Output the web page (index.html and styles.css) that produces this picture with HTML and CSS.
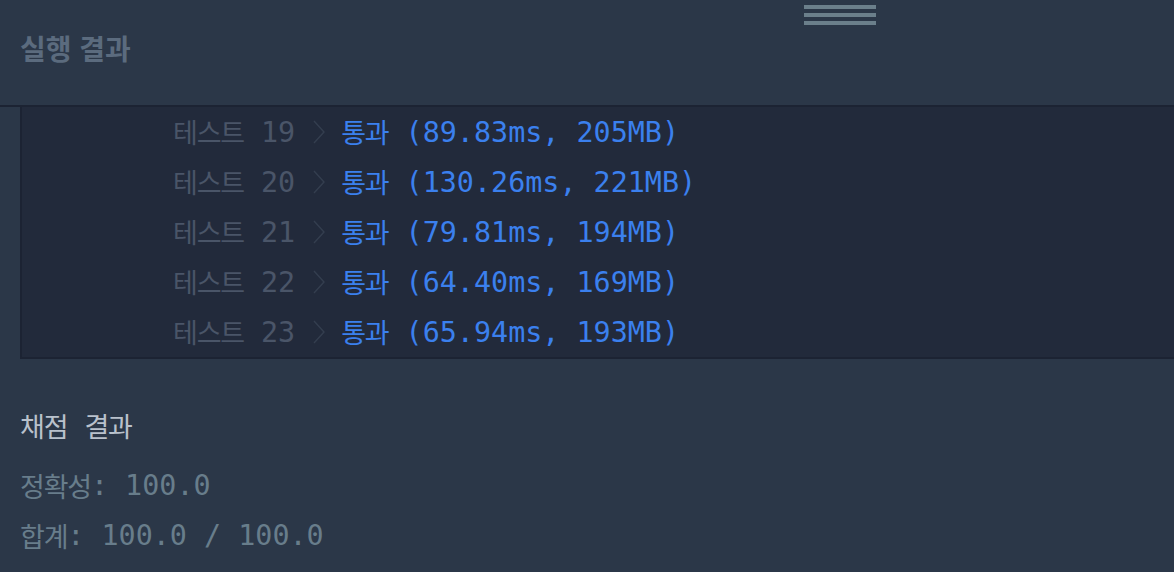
FILE: index.html
```html
<!DOCTYPE html>
<html lang="ko">
<head>
<meta charset="utf-8">
<link rel="stylesheet" href="styles.css">
</head>
<body>
<div class="page">
  <header class="head">
    <div class="grip"><span></span><span></span><span></span></div>
    <h2 class="title">실행 결과</h2>
  </header>
  <div class="console">
    <div class="row"><span class="ko gray">테스트</span><span class="gray"> 19</span><svg class="chev" viewBox="0 0 12 24"><path d="M1 1 L11 12 L1 23" /></svg><span class="ko pass">통과</span><span class="pass"> (89.83ms, 205MB)</span></div>
    <div class="row"><span class="ko gray">테스트</span><span class="gray"> 20</span><svg class="chev" viewBox="0 0 12 24"><path d="M1 1 L11 12 L1 23" /></svg><span class="ko pass">통과</span><span class="pass"> (130.26ms, 221MB)</span></div>
    <div class="row"><span class="ko gray">테스트</span><span class="gray"> 21</span><svg class="chev" viewBox="0 0 12 24"><path d="M1 1 L11 12 L1 23" /></svg><span class="ko pass">통과</span><span class="pass"> (79.81ms, 194MB)</span></div>
    <div class="row"><span class="ko gray">테스트</span><span class="gray"> 22</span><svg class="chev" viewBox="0 0 12 24"><path d="M1 1 L11 12 L1 23" /></svg><span class="ko pass">통과</span><span class="pass"> (64.40ms, 169MB)</span></div>
    <div class="row"><span class="ko gray">테스트</span><span class="gray"> 23</span><svg class="chev" viewBox="0 0 12 24"><path d="M1 1 L11 12 L1 23" /></svg><span class="ko pass">통과</span><span class="pass"> (65.94ms, 193MB)</span></div>
  </div>
  <section class="score">
    <div class="score-title"><span class="ko">채점</span><span> </span><span class="ko">결과</span></div>
    <div class="score-line"><span class="ko">정확성</span><span>: 100.0</span></div>
    <div class="score-line"><span class="ko">합계</span><span>: 100.0 / 100.0</span></div>
  </section>
</div>
</body>
</html>
```

FILE: styles.css
```css
html, body {
  margin: 0;
  padding: 0;
  background: #2b3748;
  overflow: hidden;
}
.page {
  width: 1174px;
  height: 572px;
  font-family: "DejaVu Sans Mono", "Noto Sans CJK KR", monospace;
  font-size: 28.4px;
  background: #2b3748;
}
.ko {
  font-family: "Noto Sans CJK KR", sans-serif;
  font-size: 27px;
  letter-spacing: -1.2px;
}
.head {
  position: relative;
  height: 105px;
  border-bottom: 2px solid #1c2333;
}
.grip {
  position: absolute;
  left: 804px;
  top: 5px;
  width: 72px;
  display: flex;
  flex-direction: column;
  gap: 4px;
}
.grip span {
  display: block;
  height: 4px;
  background: #6b7f8b;
}
.title {
  margin: 0;
  padding: 29px 0 0 20px;
  font-family: "Noto Sans CJK KR", sans-serif;
  font-weight: 700;
  font-size: 28px;
  line-height: 38px;
  color: #5b6b7e;
  letter-spacing: 0;
}
.console {
  margin-left: 20px;
  background: #222a3b;
  border-left: 2px solid #1c2333;
  border-bottom: 2px solid #1c2333;
  height: 250px;
  padding-left: 151px;
}
.row {
  height: 50px;
  white-space: pre;
  display: flex;
  align-items: center;
}
.row .ko { margin-top: -2px; }
.gray { color: #4a5568; }
.pass { color: #3b80ee; }
.chev {
  width: 12px;
  height: 24px;
  margin: 0 16px 0 18px;
  flex: none;
}
.chev path {
  fill: none;
  stroke: #343e4f;
  stroke-width: 1.4;
}
.score {
  padding: 41px 0 0 20px;
}
.score-title {
  color: #b9c1cc;
  height: 50px;
  white-space: pre;
  display: flex;
  align-items: center;
  margin-bottom: 10px;
}
.score-line {
  color: #687d8b;
  height: 50px;
  white-space: pre;
  display: flex;
  align-items: center;
}
```
